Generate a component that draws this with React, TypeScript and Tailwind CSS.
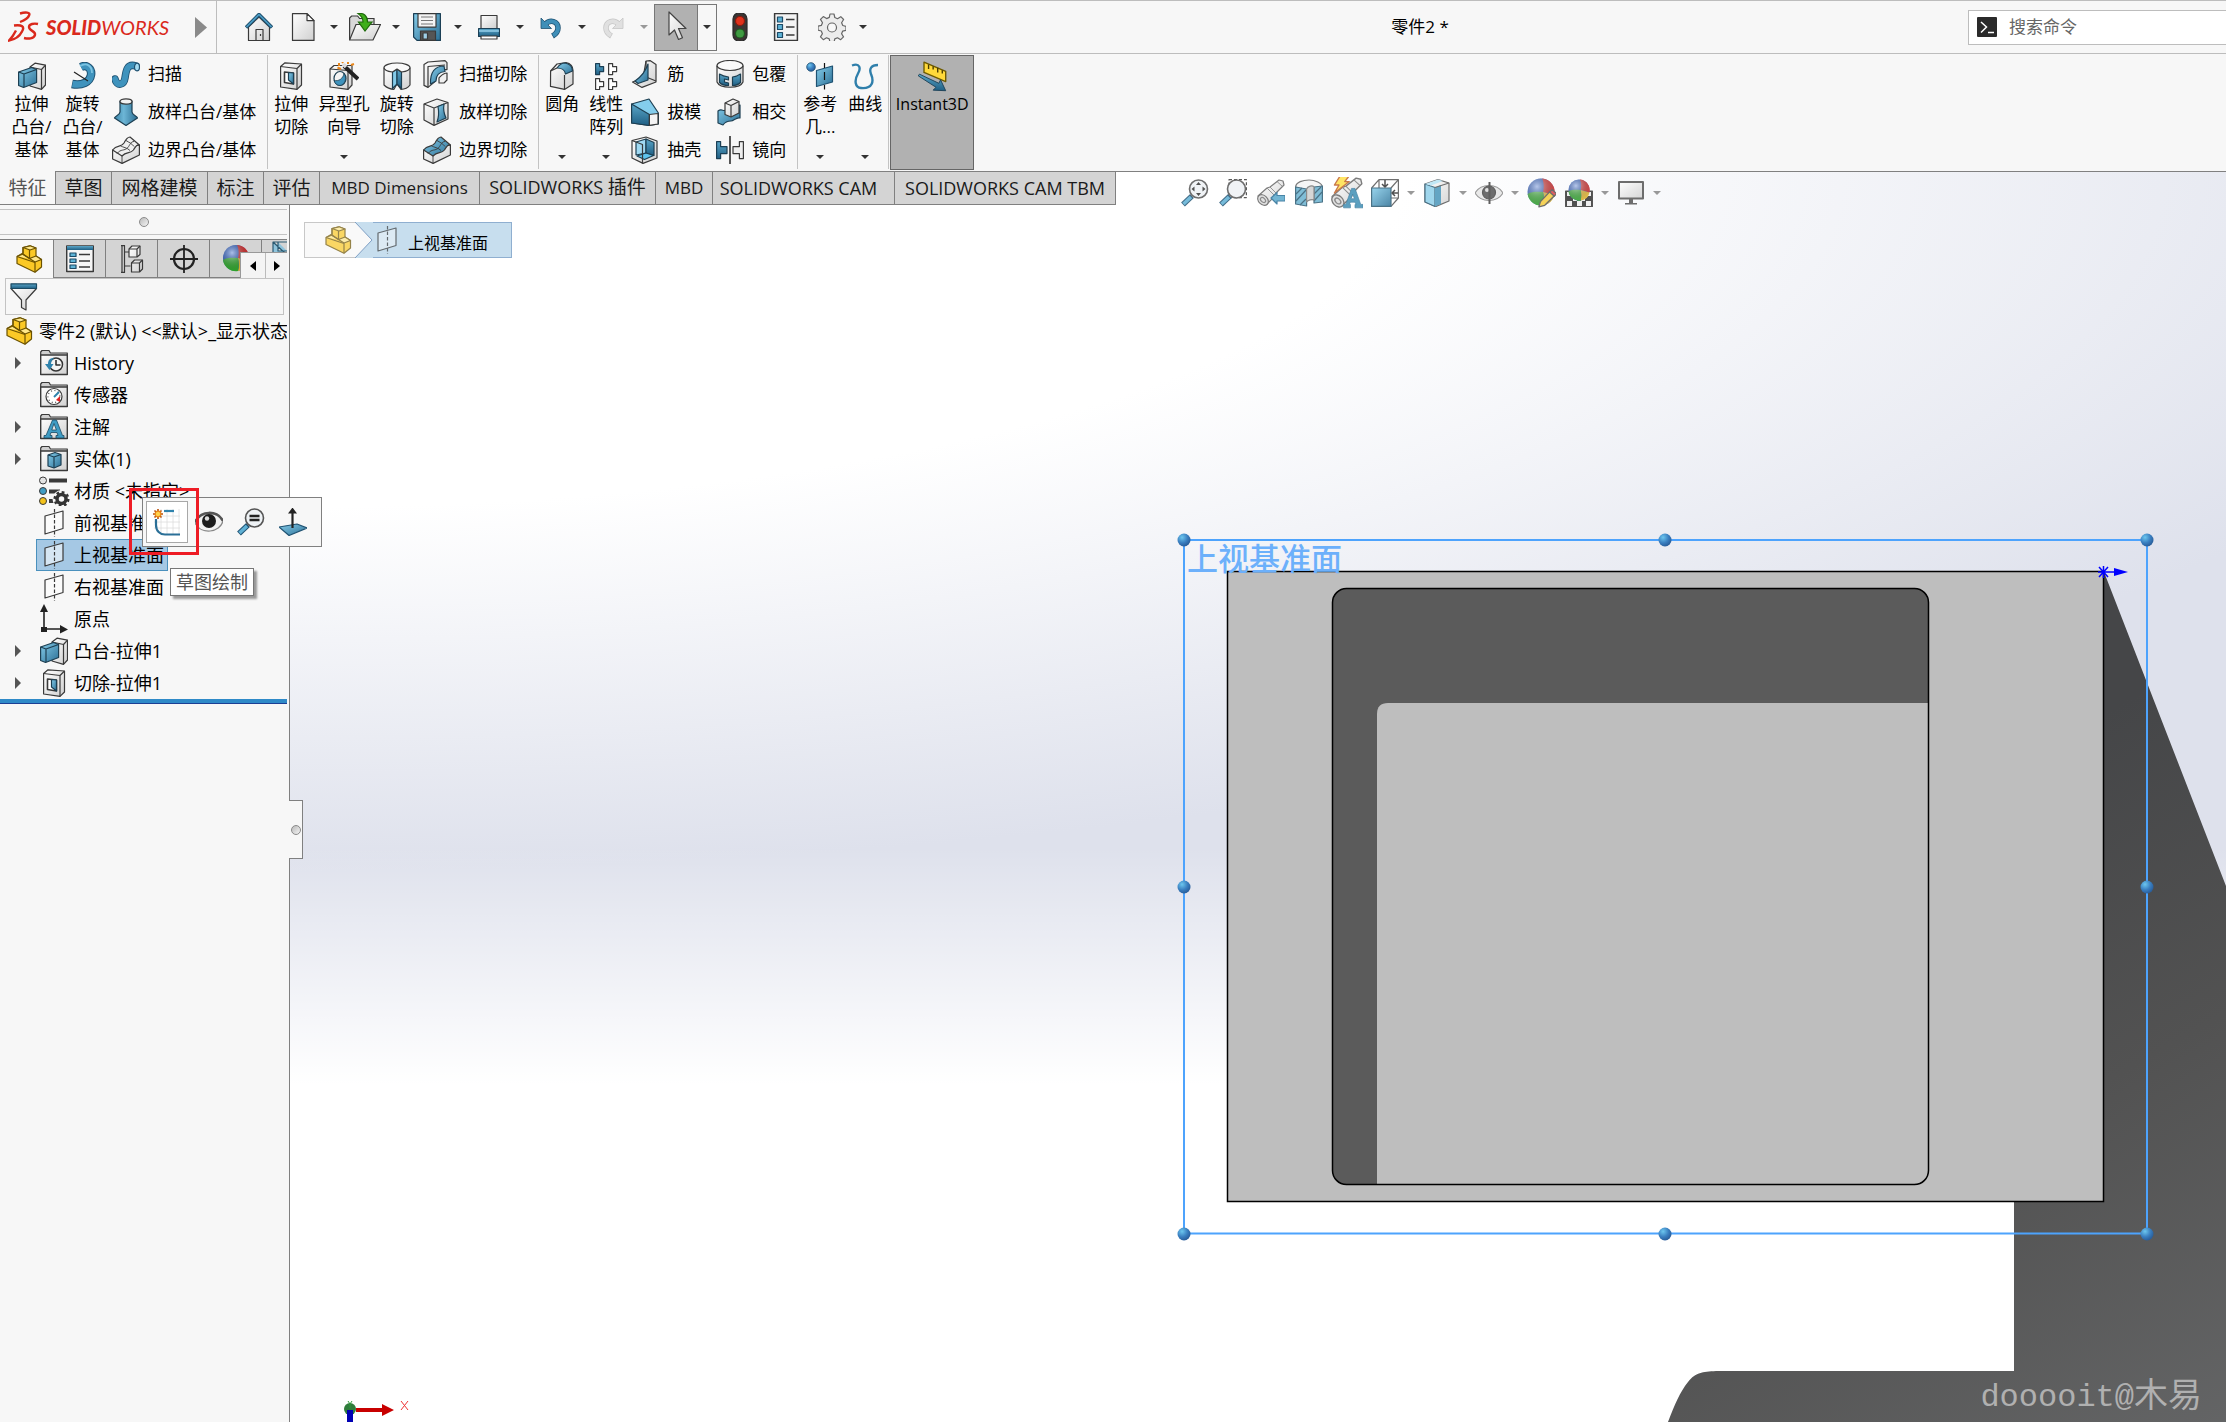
import type { ReactNode } from 'react';

type IconProps = { children: ReactNode; className?: string };

function Svg({ children, className = 'size-7' }: IconProps) {
  return (
    <svg
      viewBox="0 0 28 28"
      className={`shrink-0 ${className}`}
      fill="none"
      stroke="#3a3a3a"
      strokeWidth="1.2"
      strokeLinejoin="round"
      aria-hidden="true"
    >
      {children}
    </svg>
  );
}

/* gradients shared by all icons */
function IconDefs() {
  return (
    <svg className="absolute size-0" aria-hidden="true">
      <defs>
        <linearGradient id="blue" x1="0" y1="0" x2="1" y2="1">
          <stop offset="0" stopColor="#86cdea" />
          <stop offset="1" stopColor="#2c7096" />
        </linearGradient>
        <linearGradient id="steel" x1="0" y1="0" x2="0" y2="1">
          <stop offset="0" stopColor="#5aa6c8" />
          <stop offset="1" stopColor="#1f5f84" />
        </linearGradient>
        <linearGradient id="grey" x1="0" y1="0" x2="1" y2="1">
          <stop offset="0" stopColor="#ffffff" />
          <stop offset="1" stopColor="#d0d0d0" />
        </linearGradient>
        <linearGradient id="cone" x1="0" y1="0" x2="1" y2="0">
          <stop offset="0" stopColor="#3a85aa" />
          <stop offset="0.4" stopColor="#6db6d6" />
          <stop offset="1" stopColor="#2b6d92" />
        </linearGradient>
        <radialGradient id="ball" cx="0.35" cy="0.3" r="0.7">
          <stop offset="0" stopColor="#6cc6ee" />
          <stop offset="0.6" stopColor="#3a7fc0" />
          <stop offset="1" stopColor="#2a5f9c" />
        </radialGradient>
        <radialGradient id="shine" cx="0.35" cy="0.3" r="0.7">
          <stop offset="0" stopColor="#fff" stopOpacity="0.6" />
          <stop offset="1" stopColor="#000" stopOpacity="0.12" />
        </radialGradient>
      </defs>
    </svg>
  );
}

function Caret({ className = 'text-[#333]' }: { className?: string }) {
  return (
    <svg viewBox="0 0 8 4" className={`h-1 w-2 ${className}`} fill="currentColor" aria-hidden="true">
      <path d="M0 0h8L4 4z" />
    </svg>
  );
}

/* ---- quick access bar ---- */

const HomeIcon = () => (
  <Svg>
    <path d="M3.5 14v13.5h21V14L14 4z" fill="url(#grey)" />
    <path d="M11 27.500v-11h7v11M15.500 21v2" />
    <path d="M1 14.500 14 1.500l13 13" stroke="#1f4f6d" strokeWidth="3.600" />
    <path d="M1.500 14 14 1.500l12.500 12.500" stroke="#4a9cc4" strokeWidth="1.600" />
  </Svg>
);

const NewIcon = () => (
  <Svg>
    <path d="M3.500.6h14.500l7 7v19.800H3.500z" fill="url(#grey)" />
    <path d="M18 .6v7h7z" fill="#fff" />
  </Svg>
);

const OpenIcon = () => (
  <svg viewBox="0 0 32 28" className="h-7 w-8 shrink-0" fill="none" stroke="#3a3a3a" strokeWidth="1.200" aria-hidden="true">
    <path d="M.600 27V5l2-2h6l2 2.500H25V14" fill="#d8d8d8" />
    <path d="M.600 27 7 11.500h24.500L24 27z" fill="url(#grey)" />
    <path d="M9 .600c5.500-1 9.500 2 9.500 8.400H23L16 18 9.500 9H14c0-3-1.500-6-5-8.400z" fill="#3fae1c" stroke="#1f6b0c" />
  </svg>
);

const SaveIcon = () => (
  <Svg>
    <path d="M.6.600h26.800v26.800H4L.600 24z" fill="url(#blue)" stroke="#1b3f55" />
    <path d="M5 .600h18v13.500H5z" fill="#f4f4f4" />
    <path d="M8 4h12M8 7.500h12M8 11h12" stroke="#777" />
    <path d="M7.500 18h15v9.400h-15z" fill="#555" />
    <path d="M10 20h4.500v6H10z" fill="#9fd0e8" />
  </Svg>
);

const PrintIcon = () => (
  <Svg>
    <path d="M6 15V2.500h16V15" fill="url(#grey)" />
    <path d="M3.600 15.500h20.800v8H3.600z" fill="url(#steel)" stroke="#1b3f55" />
    <path d="M4 18h20" stroke="#a8def5" />
    <path d="M6 26h16v-3H6z" fill="#fff" />
  </Svg>
);

const UndoIcon = () => (
  <Svg>
    <path d="M8 11.500c5-5.500 13-3.500 13 3.500 0 4-2 6-5.500 8" stroke="#1f5272" strokeWidth="5.500" />
    <path d="M4 5v10.500h10.500z" fill="#3f8fb8" stroke="#1f5272" strokeWidth="0.800" />
    <path d="M8 11.500c5-5.500 13-3.500 13 3.500 0 4-2 6-5 7.500" stroke="#3f8fb8" strokeWidth="4" />
  </Svg>
);

const RedoIcon = () => (
  <Svg className="size-7 -scale-x-100">
    <path d="M8 11.500c5-5.500 13-3.500 13 3.500 0 4-2 6-5.500 8" stroke="#c6c6c6" strokeWidth="5.500" />
    <path d="M4 5v10.500h10.500z" fill="#e0e0e0" stroke="#c6c6c6" strokeWidth="0.800" />
    <path d="M8 11.500c5-5.500 13-3.500 13 3.500 0 4-2 6-5 7.500" stroke="#e0e0e0" strokeWidth="4" />
  </Svg>
);

const CursorIcon = () => (
  <Svg className="h-8 w-7">
    <path d="M7 -1v23l5.500-5 4 9.500 4-1.700-4-9.300h7.500z" fill="url(#grey)" stroke="#444" />
  </Svg>
);

const LightIcon = () => (
  <Svg>
    <rect x="7" y="0" width="14" height="28" rx="6" fill="#3b3533" stroke="#2a2a2a" />
    <circle cx="14" cy="8" r="4.500" fill="#e0321c" stroke="#8c1a0e" />
    <circle cx="14" cy="20.500" r="4.500" fill="#3f9a41" stroke="#1e5420" />
  </Svg>
);

const OptionListIcon = () => (
  <Svg>
    <path d="M2.600.600h22.800v26.800H2.600z" fill="#f3f3f3" strokeWidth="1.500" />
    <path d="M5.500 4h5v5h-5zM5.500 11.500h5v5h-5zM5.500 19.500h5v5h-5z" fill="#5db3d6" stroke="#1d4a66" />
    <path d="M14 6.500h8.500M14 14h8.500M14 22h8.500" strokeWidth="1.500" />
  </Svg>
);

const GearIcon = () => (
  <Svg>
    <path
      d="M12 1h4l.8 3.500 2.700 1.200 3.300-2 2.800 2.800-2 3.300 1.200 2.700 3.200.8v4l-3.300.8-1.100 2.600 1.900 3.200-2.800 2.800-3.200-1.900-2.700 1.100-.8 3.300h-4l-.8-3.300-2.700-1.100-3.200 1.900-2.800-2.800 1.900-3.200L3.300 18 0 17.200v-4l3.300-.8 1.200-2.700-2-3.300 2.800-2.800 3.300 2 2.700-1.200z"
      fill="#ececec"
      stroke="#666"
    />
    <circle cx="14" cy="14.500" r="4.500" fill="#f8f8f8" stroke="#666" />
  </Svg>
);

/* ---- ribbon ---- */

const ExtrudeIcon = () => (
  <Svg>
    <path d="m12 5 5-3.800 10.500 2V23l-4 4.400L12 24z" fill="url(#grey)" />
    <path d="m12 5 11.500 2.500V27M23.500 7.500l4-4.300" />
    <path d="M.600 10v13.500l5 2 13-5V7.500l-5-2z" fill="url(#blue)" stroke="#1d3f52" />
    <path d="m.600 10 5.400 2 12.600-4.500M6 12v13" stroke="#1d3f52" />
  </Svg>
);

const RevolveIcon = () => (
  <Svg>
    <path d="M12 5c6-3 11 2 10 8-1 7-9 11-19 9" stroke="#1f5272" strokeWidth="8.500" />
    <path d="M12 5c6-3 11 2 10 8-1 7-9 11-18.500 9" stroke="#3f93bd" strokeWidth="6.500" />
    <path d="M11 4c7-4 12 0 12 7" stroke="#7cc4e2" strokeWidth="1.800" />
    <path d="m5 10 14 9" stroke="#222" />
  </Svg>
);

const SweepIcon = () => (
  <Svg>
    <path d="M3 19c2 8 9 6 10-1S15 3 24 6" stroke="#1f5272" strokeWidth="7.500" strokeLinecap="round" />
    <path d="M3 19c2 8 9 6 10-1S15 3 24 6" stroke="#3f93bd" strokeWidth="5.800" strokeLinecap="round" />
    <ellipse cx="25" cy="7" rx="2.500" ry="3.800" fill="#a4dcf2" stroke="#1f5272" />
  </Svg>
);

const LoftIcon = () => (
  <Svg>
    <path d="M8 3v11c0 3-5 4-5.500 6L14 27.500 25.500 20c0-2-5.500-3-5.500-6V3z" fill="url(#cone)" stroke="#1d3f52" />
    <ellipse cx="14" cy="3.500" rx="6" ry="2.600" fill="#f2f2f2" />
  </Svg>
);

function BoundarySolid({ top }: { top: string }) {
  return (
    <Svg>
      <path d="M.600 14v9l9.500 4.400L27.400 19V9z" fill="url(#grey)" />
      <path d="M.600 14C5 8 9 12 12 7c2-4 4-6 6-6l9.400 8c-3-1-4 2-6 5-3 4-7 1-11.400 6z" fill={top} />
      <path d="M5 17.500c4-5 7-2 11-6 2-3 3-6 6-6M8 9.500c3 2 7 2 10 5M14 4.500c3 2 6 3 8 6M10 20v7.400" strokeWidth="0.900" />
    </Svg>
  );
}

const CutExtrudeIcon = () => (
  <Svg>
    <path d="M3.600 4.500 8 .800 24.500 2v21L20 27.400 3.600 25z" fill="url(#grey)" />
    <path d="m3.600 4.500 16.400 2v21M20 6.500 24.500 2" />
    <path d="m7.500 10 9 1v11l-9-1.500z" fill="#fff" strokeWidth="1.600" />
    <path d="M16.500 11v11l-5-4v-7.500z" fill="url(#blue)" stroke="#1d3f52" />
  </Svg>
);

const HoleWizardIcon = () => (
  <Svg className="h-7 w-[30px]">
    <path d="m0 7 4-3.500h18V23l-4 4.400L0 25z" fill="url(#grey)" />
    <path d="m0 7 18 1.500v19" />
    <ellipse cx="10" cy="16.500" rx="6" ry="7" fill="#f4f4f4" stroke="#1d3f52" />
    <path d="M14 11.500c3 4 1.500 11-4 12-3 0-5-2-6-5 5 1 9-2 10-7z" fill="#3f93bd" stroke="#1d3f52" strokeWidth="0.800" />
    <path d="m14 4 14 13" stroke="#222" strokeWidth="4" />
    <path d="m13 2 3 3" stroke="#ddd" strokeWidth="3.500" />
    <path d="M9 1v3M7.500 5.500 11 7M18 -1v3M21 3l3-1M12 -1l1 2" stroke="#e8861a" strokeWidth="2" />
  </Svg>
);

const CutRevolveIcon = () => (
  <Svg>
    <path d="M1 6v17c3 3 7 4.300 10 4.300L14 22l4 5.300c4 0 7-1.500 9-4.300V6z" fill="url(#grey)" />
    <path d="M14 7v15l-4.500 4.500V10z" fill="#84cbe9" stroke="#1d3f52" />
    <path d="M14 7v15l4.500 4.500V10z" fill="url(#steel)" stroke="#1d3f52" />
    <path d="M9.500 10C5 9.500 1 8 1 5.500S7 1 14 1s13 2 13 4.500-4 4-8.500 4.500L14 7z" fill="#fafafa" />
  </Svg>
);

const CutSweepIcon = () => (
  <Svg>
    <path d="M1 4.500 5 2 22 .600l2 2v7h-4c-5 1-8 5-8 12L5 27.400l-4-2z" fill="url(#grey)" />
    <path d="M21 6C12 6 7 12 7.500 24l5.500-3c0-5 3-9 9-9.500z" fill="url(#blue)" stroke="#1d3f52" />
    <path d="M16 18c2-2 4-5 8-5v7l-3 3h-5z" fill="#f0f0f0" />
    <path d="M5 27.400V6.500L22 5" />
  </Svg>
);

const CutLoftIcon = () => (
  <Svg>
    <path d="m1 6 13-5 11 3.500V21l-14 6.400L1 22z" fill="url(#grey)" />
    <path d="m1 6 10 4 14-5.500M11 10v17" />
    <path d="m15 8.500 6-2.500c-1 6 0 10 2 14l-9 4c2-5 2-10 1-15.500z" fill="url(#blue)" stroke="#1d3f52" />
  </Svg>
);

const FilletIcon = () => (
  <Svg>
    <path d="M2.600 9 9 2l9-1.400c5 1 7 4 7 8V22l-8.500 5.400-14-3z" fill="url(#grey)" />
    <path d="M9 6c2-3 4-5 8-5 5 1 7.500 4 7.500 8l-7 3C17 8 13 6 9 6z" fill="url(#blue)" stroke="#1d3f52" />
    <path d="M2.600 9 9 6m7.500 21.400V13" />
  </Svg>
);

const PatternIcon = () => (
  <Svg>
    <path d="M3.600 1.600h4v3h4v5h-4v3h-4z" fill="url(#steel)" stroke="#1b3f55" />
    <path
      d="M16.600 1.600h4v3h4v5h-4v3h-4zM3.600 16.600h4v3h4v5h-4v3h-4zM16.600 16.600h4v3h4v5h-4v3h-4z"
      fill="#fff"
    />
  </Svg>
);

const RibIcon = () => (
  <Svg>
    <path d="M15 1l4-.400 6 4V22l-14 5.400L1.500 22 12 18z" fill="url(#grey)" />
    <path d="M15 1v16l10 4" />
    <path d="M4 21C10 17 15 10 17 4v16l-10 3.500z" fill="url(#blue)" stroke="#1d3f52" />
  </Svg>
);

const DraftIcon = () => (
  <Svg>
    <path d="M.600 6 18 1l9.400 14v11l-9 1.400L.600 25z" fill="#84cdec" stroke="#1d3f52" />
    <path d="m.600 6 17.800 10.500v11L.600 25z" fill="url(#steel)" stroke="#1d3f52" />
    <path d="M18.400 16.500 27 15.500V26l-8.600 1.400z" fill="#f4f4f4" />
  </Svg>
);

const ShellIcon = () => (
  <Svg>
    <path d="M1 4.500 15 1l11 4v17l-14 5.400L1 22z" fill="url(#grey)" />
    <path d="m5 6 10-3v14L5 19z" fill="#9fd9f2" stroke="#1d3f52" />
    <path d="m15 3 8 3.500v13L15 17z" fill="url(#steel)" stroke="#1d3f52" />
    <path d="m6 20 9-3 7.500 2.500-9 4z" fill="#5fc4ee" stroke="#1d3f52" />
    <path d="m1 4.500 10.500 4v19" />
  </Svg>
);

const WrapIcon = () => (
  <Svg>
    <path d="M1 6v16c3 7 23 7 26 0V6z" fill="url(#grey)" />
    <ellipse cx="14" cy="5.500" rx="13" ry="5" fill="#fafafa" />
    <path d="M3.500 14c3 2 5 2.500 9 3v3l-4-1v3l4 1v2.500c-4 0-7-1-9-3z" fill="url(#steel)" stroke="#1d3f52" />
    <path d="M24.500 14c-3 2-4 2.500-8 3v8.500c4 0 6-1 8-3z" fill="url(#steel)" stroke="#1d3f52" />
  </Svg>
);

const IntersectIcon = () => (
  <Svg>
    <path d="M2 13c4-3 5 1 8-1l14-5v13c-4-1-6 3-9 3s-6 1-8 4l-5-2z" fill="url(#blue)" stroke="#1d3f52" />
    <path d="m9 5 8-4 6 2.500V15l-8 4-6-2.500z" fill="url(#grey)" />
    <path d="m9 5 6 2.500 8-4M15 7.500V19" />
  </Svg>
);

const MirrorIcon = () => (
  <Svg className="h-7 w-[30px]">
    <path d="M.600 5.600h4v5h6.400v7H4.600v5h-4z" fill="url(#steel)" stroke="#1b3f55" />
    <path d="M27.400 5.600h-4v5H17v7h6.400v5h4z" fill="#eee" />
    <path d="M14 0v28" stroke="#111" strokeWidth="1.400" />
  </Svg>
);

const RefGeomIcon = () => (
  <Svg>
    <circle cx="5" cy="5" r="4.300" fill="url(#ball)" stroke="#1f5272" strokeWidth="0.800" />
    <path d="m10.500 8.500 16-4.500v16l-16 4.500z" fill="url(#blue)" stroke="#1f5272" />
    <path d="M18.500 1v5M18.500 10v8M18.500 23v4.500" stroke="#111" />
  </Svg>
);

const CurveIcon = () => (
  <Svg>
    <path
      d="M1 3.500c8-3 9 3 6 8-4 7-3 14 3 14.500 12 1 13-7 10-14-2-5 0-9 7-9"
      stroke="#2f7fab"
      strokeWidth="2.400"
    />
  </Svg>
);

const Instant3DIcon = () => (
  <Svg className="h-8 w-8">
    <path d="m7 1 19 8v9L7 10z" fill="#ffd93a" stroke="#6d5a00" />
    <path d="M11 3v4M15 4.500v3M19 6v4M23 8v3" stroke="#4a3d00" />
    <path d="m2 13 1-1.500 17 8 1.500-3L26 26l-11-.500 2.500-2.500z" fill="url(#steel)" stroke="#1b3f55" strokeWidth="0.800" />
  </Svg>
);

/* ---- feature tree ---- */

const PartIcon = () => (
  <Svg>
    <path d="M2 11.500 8 8V2.500L15 .800l6 2.200v8l5.500 3.500V22L20 27.200 2 18.500z" fill="#fbc926" stroke="#6b5200" />
    <path d="M8 2.500 15 .800 21 3l-6 2z M2 11.500 8 9l6.500 4.500M20 17l6.500-2.500L21 11l-6.500 2.500z" fill="#ffe88a" stroke="#6b5200" />
    <path d="M8 2.500v7l6.500 4V5M2 11.500 20 17.500v9.700" stroke="#6b5200" />
  </Svg>
);

function Folder({ children }: { children: ReactNode }) {
  return (
    <Svg>
      <path d="M.700 25.500V3L2 1.500h7L10.500 4h16.800v21.500z" fill="#cfcfcf" />
      <path d="M.700 6h26.600v19.500H.700z" fill="url(#grey)" strokeWidth="1.400" />
      {children}
    </Svg>
  );
}

const HistoryIcon = () => (
  <Folder>
    <circle cx="16" cy="15.500" r="6.500" fill="#f6f6f6" stroke="#333" strokeWidth="1.500" />
    <path d="M16 11v5h4.500" stroke="#333" strokeWidth="1.600" />
    <path d="M14 9c-4 0-6 2-6 6H5l4.500 6 4-6H11c0-2 1-4 3-6z" fill="#2f83ad" stroke="none" />
  </Folder>
);

const SensorIcon = () => (
  <Folder>
    <circle cx="14" cy="15.500" r="8" fill="#fff" />
    <circle cx="14" cy="15.500" r="6" stroke="#555" strokeDasharray="1 2.500" />
    <path d="M20 15v6l-4-2z" fill="#e02020" stroke="none" />
    <path d="m14 16 5-5" stroke="#2f83ad" strokeWidth="2" />
  </Folder>
);

const NoteIcon = () => (
  <Folder>
    <path
      d="M12.500 7h4l6 15.500h1.500V25h-8v-2.500h2l-1-3h-6l-1 3h2V25H4v-2.500h2zM14 10.500 11.800 17h4.600z"
      fill="#3f9cc4"
      stroke="#1b4a63"
      strokeWidth="0.800"
    />
  </Folder>
);

const SolidIcon = () => (
  <Folder>
    <path d="m8 10 7-2.500 6 2v10.500l-7 3-6-2z" fill="url(#blue)" stroke="#1d3f52" />
    <path d="m8 10 6 2 7-2.500M14 12v11" stroke="#1d3f52" />
  </Folder>
);

const MaterialIcon = () => (
  <svg viewBox="0 0 32 30" className="h-[30px] w-8 shrink-0" fill="none" stroke="#3a3a3a" aria-hidden="true">
    <path d="M11 4.500h18M11 15.500h11M11 25h5" strokeWidth="4" />
    <circle cx="5" cy="4.500" r="3.500" fill="#e4e4e4" />
    <circle cx="5" cy="15" r="3.500" fill="#3f9cc4" />
    <circle cx="5" cy="25" r="3.500" fill="#f3c21a" />
    <circle cx="23.500" cy="23" r="7" stroke="#f7f7f7" strokeWidth="4" />
    <circle cx="23.500" cy="23" r="4.500" stroke="#333" strokeWidth="3.500" />
    <circle cx="23.500" cy="23" r="6.800" stroke="#333" strokeWidth="2.500" strokeDasharray="2.700 2.640" />
  </svg>
);

const PlaneIcon = ({ className = 'size-7' }: { className?: string }) => (
  <Svg className={className}>
    <path d="M5 7 23 2v17.500L5 25z" fill="#fff" fillOpacity="0.550" />
    <path d="M14.500 0v28" strokeDasharray="3.500 2" />
  </Svg>
);

const OriginIcon = () => (
  <Svg className="h-[30px] w-7">
    <path d="M4 4v20h17" strokeWidth="1.600" stroke="#222" />
    <path d="M1 22h6v5H1zM0 7l4-8 4 8zM20 20l8 4.500-8 4z" fill="#222" stroke="none" />
  </Svg>
);

/* ---- manager tabs ---- */

const PropertyIcon = () => (
  <Svg>
    <path d="M.700 1h26.600v25.500H.700z" fill="#f6f6f6" strokeWidth="1.500" />
    <path d="M1 1h26v4H1z" fill="url(#steel)" stroke="none" />
    <path d="M4 8h6v3.500H4zM4 14h6v3.500H4zM4 20h6v3.500H4z" fill="#5db3d6" stroke="#1d4a66" />
    <path d="M13 9.500h11M13 16h11M13 22h11" strokeWidth="1.500" />
  </Svg>
);

const ConfigIcon = () => (
  <Svg>
    <path d="M3 .600h4M3 27.400h4M4 .600v26.800h2.500V.600M6.500 7H11M6.500 21h6" />
    <path d="m11 4 3-3h8v8.500L19 12h-8zM13.500 18l3-3h8v9l-3 3h-8z" fill="url(#grey)" />
    <path d="M11 4h8v8M19 4l3-3M13.500 18h8v9M21.500 18l3-3" />
  </Svg>
);

const DimXpertIcon = () => (
  <Svg>
    <circle cx="14" cy="14" r="10" stroke="#222" strokeWidth="2.200" />
    <path d="M14 0v28M0 14h28" stroke="#222" strokeWidth="1.800" />
  </Svg>
);

const BeachBall = ({ r = 13 }: { r?: number }) => (
  <g transform={`translate(14 13) scale(${r / 13})`} stroke="none">
    <circle r="13" fill="#2e60c8" />
    <path d="M1-13A13 13 0 0 1 13 3L2 0c1-4 1-9-1-13z" fill="#dc2d2d" />
    <path d="M2 0l11 3A13 13 0 0 1 2 13c1-4 1-9 0-13z" fill="#f4c430" />
    <path d="M-13 2C-8-1-3 0 2 0c1 4 1 9 0 13A13 13 0 0 1-13 2z" fill="#35b432" />
    <circle r="13" fill="url(#shine)" />
  </g>
);

const FilterIcon = () => (
  <Svg>
    <path d="M1 5.500h25.500L16 17v10l-4.500-2.500V17z" fill="url(#grey)" />
    <path d="M1 .800h25.500v4.700H1z" fill="url(#steel)" stroke="#1b4a63" />
  </Svg>
);

/* ---- popup toolbar ---- */

const SketchIcon = () => (
  <Svg>
    <path d="M8 1v26M14 1v26M20 1v26M26 1v26M1 8h26M1 14h26M1 20h26" stroke="#ddd" strokeWidth="0.800" />
    <path d="M11 3h10" stroke="#2f83ad" strokeWidth="2.200" />
    <path d="M3 11v6c0 6 4 9.500 9 9.500h15" stroke="#2a6f97" strokeWidth="2.200" />
    <path d="M5 1v10M0 6h10M1.500 2.500l7 7M8.500 2.500l-7 7" stroke="#b8500c" strokeWidth="1.600" />
    <circle cx="5" cy="6" r="2.800" fill="#ffd24a" stroke="#e8861a" />
  </Svg>
);

const EyeIcon = () => (
  <Svg>
    <path d="M0 15C6 3 22 3 28 13c-3 12-22 14-28 2z" fill="#f2f2f2" stroke="#888" />
    <path d="M0 14C6 2 22 2 28 13" stroke="#555" strokeWidth="2.500" />
    <circle cx="14" cy="13" r="7" fill="#1c1c1c" stroke="none" />
    <circle cx="12" cy="10.500" r="2.200" fill="#ddd" stroke="none" />
  </Svg>
);

function Lens({ children }: { children?: ReactNode }) {
  return (
    <>
      <path d="m11 17-9 8.500" stroke="#1f5272" strokeWidth="5.500" />
      <path d="m10 18-7.500 7" stroke="#5fb0d4" strokeWidth="3.500" />
      <circle cx="17.500" cy="10" r="9" fill="#eef2f5" stroke="#555" strokeWidth="1.600" />
      {children}
    </>
  );
}

const ZoomSelIcon = () => (
  <Svg>
    <Lens>
      <path d="M12.500 8h10M12.500 12h10" stroke="#222" strokeWidth="2.400" />
    </Lens>
  </Svg>
);

const NormalToIcon = () => (
  <Svg>
    <path d="m0 19 18-3 10 4-18 7.500z" fill="url(#blue)" stroke="#1f5272" />
    <path d="M13.500 20V4" stroke="#222" strokeWidth="2.200" />
    <path d="m9 5.500 4.500-6 4.500 6z" fill="#222" stroke="none" />
  </Svg>
);

/* ---- view toolbar ---- */

const ZoomFitIcon = () => (
  <Svg>
    <Lens>
      <path d="m17.500 3 2.500 3h-5zM17.500 17l2.500-3h-5zM10.500 10l3-2.500v5zM24.500 10l-3-2.500v5z" fill="#333" stroke="none" />
    </Lens>
  </Svg>
);

const ZoomAreaIcon = () => (
  <Svg>
    <path d="M10 .600h17.400v18H10z" strokeDasharray="3 2" />
    <Lens />
  </Svg>
);

const Scope = () => (
  <>
    <path d="M1 17 10 9l3-1 9-7 4 1 1 4-8 8-1 3-8 8z" fill="url(#grey)" stroke="#666" />
    <path d="m10 9 8 8M13 8l6 6M20 2.500l5.500 5" stroke="#777" strokeWidth="0.900" />
    <ellipse cx="6" cy="21" rx="4.500" ry="6" fill="#dcdcdc" stroke="#666" transform="rotate(-45 6 21)" />
    <ellipse cx="6" cy="21" rx="2" ry="3" stroke="#777" transform="rotate(-45 6 21)" />
  </>
);

const PrevViewIcon = () => (
  <Svg>
    <Scope />
    <path d="m14 19 6-5.500v3h8v5.500h-8v3z" fill="#5aa9cc" stroke="#2a6f97" />
  </Svg>
);

const SectionIcon = () => (
  <Svg>
    <path d="M.600 8C1 3 8 1 14 1s13 3 13.400 7v4l-8 6h-7z" fill="#f4f4f4" stroke="#666" />
    <path d="m.600 8 11 2v17l-11-2zM19 8l8.400-1v16L19 24z" fill="#6bb2d0" stroke="#2b5a72" />
    <path d="m1 15 6-6M1 22l10-11M5 26l6-6M19 15l7-7M19 22l8-9" stroke="#2b5a72" />
    <path d="M11.600 10c1-3 6-4 7.400-2v13c-2-1-6 0-7.400 2z" fill="#d0d0d0" stroke="#777" />
  </Svg>
);

const DynamicIcon = () => (
  <Svg className="h-8 w-8">
    <Scope />
    <path d="M8-1h8l-4 5h4L3 14l4-7H3z" fill="#ffe04a" stroke="#c0612b" />
    <path
      d="M18 10h3l5 14h2v3h-7v-3h1l-1-2h-4l-1 2h1v3h-6v-3h2zM19 15l-1.500 4h3z"
      fill="#3f8fb4"
      stroke="#2a6f97"
      strokeWidth="0.600"
    />
  </Svg>
);

const OrientIcon = () => (
  <Svg>
    <path d="M.600 9 8 .600h19.400V19L20 27.400M8 .600V9M20 19h7.400M20 9l7.400-8.400" fill="#fff" stroke="#555" />
    <path d="M.600 9H20v18.400H.600z" fill="url(#blue)" stroke="#2b5a72" />
    <path d="M14 1v7m-3-3 3 3 3-3M27 14h-6m3-3-3 3 3 3" stroke="#333" strokeWidth="1.500" />
  </Svg>
);

const DisplayIcon = () => (
  <Svg>
    <path d="m2 5 13-4.400L26 4v18l-13 5.400L2 23z" fill="url(#grey)" stroke="#555" />
    <path d="m2 5 10 3.500v19L2 23z" fill="#8fd0ea" stroke="#2b5a72" />
    <path d="m12 8.500 6-2.500v19l-6 2.400z" fill="#4a96ba" stroke="none" />
    <path d="m2 5 13-4.400L20 2 8 6.500z" fill="#b6e3f5" stroke="none" />
    <path d="m12 8.500 14-4.500" stroke="#555" />
  </Svg>
);

const HideShowIcon = () => (
  <Svg>
    <path d="M0 14C6 4 22 4 28 14c-6 10-22 10-28 0z" fill="#e6e6e6" stroke="#888" />
    <circle cx="14" cy="13.500" r="6.500" fill="#555" stroke="#444" />
    <circle cx="12" cy="11" r="2" fill="#ddd" stroke="none" />
    <path d="M14.500 3v22" stroke="#444" strokeWidth="2" />
  </Svg>
);

const AppearanceIcon = () => (
  <Svg className="size-[30px]">
    <BeachBall r={12.5} />
    <path d="m12 27 1.500-5 9-9.500 4 4-9 9z" fill="#f5cb3c" stroke="#555" />
    <path d="m22 13 2.500-2 4 3.500-2 2.500z" fill="#d9434a" stroke="#555" />
  </Svg>
);

const SceneIcon = () => (
  <Svg>
    <path d="M.600 12h26.800v15.400H.600z" fill="#333" />
    <path d="M2 13h4v4H2zM8 18h4v4H8zM16 18h4v4h-4zM22 13h4v4h-4zM2 22h5v5H2zM12 22h5v5h-5zM21 22h5v5h-5z" fill="#eee" stroke="none" />
    <g transform="translate(0 -2)">
      <BeachBall r={10.5} />
    </g>
  </Svg>
);

const MonitorIcon = () => (
  <Svg>
    <path d="M2 3h24v16.500H2z" fill="url(#grey)" stroke="#555" strokeWidth="2" />
    <path d="M12 20h4v4h4v1.500H8V24h4z" fill="#555" stroke="none" />
  </Svg>
);

/* ---- building blocks ---- */

type QuickButtonProps = { label: string; icon: ReactNode; caret?: boolean; faded?: boolean };

function QuickButton({ label, icon, caret = true, faded = false }: QuickButtonProps) {
  return (
    <div className="flex items-center">
      <button aria-label={label} className="flex w-11 items-center justify-center">
        {icon}
      </button>
      {caret && (
        <button aria-label={`${label} 选项`} className="flex h-8 w-[18px] items-center justify-center">
          <Caret className={faded ? 'text-[#999]' : 'text-[#333]'} />
        </button>
      )}
    </div>
  );
}

type BigButtonProps = { icon: ReactNode; lines: string[]; width: string; caret?: boolean };

function BigButton({ icon, lines, width, caret = false }: BigButtonProps) {
  return (
    <button className={`flex flex-col items-center ${width}`}>
      <span className="mt-[7px] mb-[2px] flex h-7 items-center">{icon}</span>
      {lines.map((line) => (
        <span key={line} className="leading-[23px] whitespace-nowrap">
          {line}
        </span>
      ))}
      {caret && (
        <span className="mt-auto flex pb-[10px]">
          <Caret />
        </span>
      )}
    </button>
  );
}

function SmallButtons({ items, className = '' }: { items: [string, ReactNode][]; className?: string }) {
  return (
    <div className={`flex flex-col ${className}`}>
      {items.map(([label, icon]) => (
        <button key={label} className="flex h-[38px] items-center gap-2 whitespace-nowrap">
          <span className="flex w-7 justify-center">{icon}</span>
          {label}
        </button>
      ))}
    </div>
  );
}

function RibbonGroup({ children }: { children: ReactNode }) {
  return <div className="mt-px flex h-[114px] border-r border-[#c3c3c3]">{children}</div>;
}

function TitleBar() {
  return (
    <header className="flex h-[54px] items-center border-t border-b border-[#bdbdbd] bg-[#f7f7f7]">
      <div className="flex h-full w-[217px] items-center border-r border-[#bdbdbd] pl-2">
        <svg viewBox="0 0 31 32" className="h-8 w-[31px]" fill="none" stroke="#da291c" strokeWidth="2.400" aria-hidden="true">
          <path d="M12 2.500c5-1.500 11-1.500 9 2-1 3-5 5-9 6.500M6 14.500c8-1 11 1 8 6-2 4-7 8-13 9 3-3 5-6 7-10" />
          <path d="M30 13c-4-1-9 0-9 3 0 4 7 4 6 8s-7 4-11 3" />
        </svg>
        <span className="ml-[7px] w-[142px] font-[Lato] text-xl leading-7 whitespace-nowrap text-[#da291c] italic">
          <b className="font-black">SOLID</b>WORKS
        </span>
        <button aria-label="展开菜单" className="ml-[7px]">
          <svg viewBox="0 0 12 21" className="h-[21px] w-3" fill="#8a8a8a" aria-hidden="true">
            <path d="M0 0v21l12-10.500z" />
          </svg>
        </button>
      </div>
      <nav className="flex h-full items-center pl-5" aria-label="快速访问">
        <QuickButton label="主页" icon={<HomeIcon />} caret={false} />
        <QuickButton label="新建" icon={<NewIcon />} />
        <QuickButton label="打开" icon={<OpenIcon />} />
        <QuickButton label="保存" icon={<SaveIcon />} />
        <QuickButton label="打印" icon={<PrintIcon />} />
        <QuickButton label="撤销" icon={<UndoIcon />} />
        <QuickButton label="重做" icon={<RedoIcon />} faded />
        <div className="ml-px flex h-[47px] border border-[#777]">
          <button aria-label="选择" className="flex w-[42px] items-center justify-center bg-[#b1b1b1]">
            <CursorIcon />
          </button>
          <button aria-label="选择 选项" className="flex w-[19px] items-center justify-center border-l border-[#777]">
            <Caret />
          </button>
        </div>
        <div className="ml-px flex gap-[2px]">
          <QuickButton label="重建模型" icon={<LightIcon />} caret={false} />
          <QuickButton label="文件属性" icon={<OptionListIcon />} caret={false} />
          <QuickButton label="选项" icon={<GearIcon />} />
        </div>
      </nav>
      <h1 className="flex-1 text-center text-[17px]">零件2 *</h1>
      <label className="flex h-[35px] w-[258px] items-center gap-3 border border-r-0 border-[#bdbdbd] bg-white pl-2">
        <svg viewBox="0 0 20 20" className="size-5 shrink-0" fill="none" aria-hidden="true">
          <rect width="20" height="20" rx="1" fill="#2a2a2a" />
          <path d="m4 5 5.500 5L4 15.500M11 15.500h6" stroke="#fff" strokeWidth="1.500" />
        </svg>
        <input
          type="text"
          aria-label="搜索命令"
          placeholder="搜索命令"
          className="w-full min-w-0 text-[17px] outline-none placeholder:text-[#666]"
        />
      </label>
    </header>
  );
}

function Ribbon() {
  return (
    <div className="flex h-[117px] bg-[#f7f7f7] text-[17px]">
      <RibbonGroup>
        <div className="flex pl-[6px]">
          <BigButton icon={<ExtrudeIcon />} lines={['拉伸', '凸台/', '基体']} width="w-[51px]" />
          <BigButton icon={<RevolveIcon />} lines={['旋转', '凸台/', '基体']} width="w-[51px]" />
        </div>
        <SmallButtons
          className="pr-[11px] pl-1"
          items={[
            ['扫描', <SweepIcon />],
            ['放样凸台/基体', <LoftIcon />],
            ['边界凸台/基体', <BoundarySolid top="#f0f0f0" />],
          ]}
        />
      </RibbonGroup>
      <RibbonGroup>
        <BigButton icon={<CutExtrudeIcon />} lines={['拉伸', '切除']} width="w-[46px]" />
        <BigButton icon={<HoleWizardIcon />} lines={['异型孔', '向导']} width="w-[60px]" caret />
        <BigButton icon={<CutRevolveIcon />} lines={['旋转', '切除']} width="w-[45px]" />
        <SmallButtons
          className="pr-[11px] pl-1"
          items={[
            ['扫描切除', <CutSweepIcon />],
            ['放样切除', <CutLoftIcon />],
            ['边界切除', <BoundarySolid top="url(#blue)" />],
          ]}
        />
      </RibbonGroup>
      <RibbonGroup>
        <BigButton icon={<FilletIcon />} lines={['圆角']} width="w-[46px]" caret />
        <BigButton icon={<PatternIcon />} lines={['线性', '阵列']} width="w-[42px]" caret />
        <SmallButtons
          className="pl-1"
          items={[
            ['筋', <RibIcon />],
            ['拔模', <DraftIcon />],
            ['抽壳', <ShellIcon />],
          ]}
        />
        <SmallButtons
          className="pr-[11px] pl-[15px]"
          items={[
            ['包覆', <WrapIcon />],
            ['相交', <IntersectIcon />],
            ['镜向', <MirrorIcon />],
          ]}
        />
      </RibbonGroup>
      <RibbonGroup>
        <BigButton icon={<RefGeomIcon />} lines={['参考', '几...']} width="w-11" caret />
        <BigButton icon={<CurveIcon />} lines={['曲线']} width="w-[46px]" caret />
      </RibbonGroup>
      <div className="mt-px ml-px flex h-[115px] border border-[#666] bg-[#b1b1b1] text-base">
        <BigButton icon={<Instant3DIcon />} lines={['Instant3D']} width="w-[82px]" />
      </div>
    </div>
  );
}

const COMMAND_TABS = [
  { cjk: '草图', width: 'w-14' },
  { cjk: '网格建模', width: 'w-24' },
  { cjk: '标注', width: 'w-14' },
  { cjk: '评估', width: 'w-14' },
  { latin: 'MBD Dimensions', width: 'w-[160px] text-[17px]' },
  { latin: 'SOLIDWORKS ', cjk: '插件', width: 'w-[176px] text-lg' },
  { latin: 'MBD', width: 'w-[57px] text-[17px]' },
  { latin: 'SOLIDWORKS CAM', width: 'w-[182px] pr-[10px] text-lg' },
  { latin: 'SOLIDWORKS CAM TBM', width: 'w-[221px] text-lg' },
];

function CommandTabs() {
  return (
    <div role="tablist" className="flex h-[34px] leading-8 text-[#1a1a1a]">
      <button role="tab" aria-selected="true" className="w-[55px] border-b border-[#808080] bg-[#f7f7f7] text-[19px] text-[#555]">
        特征
      </button>
      {COMMAND_TABS.map(({ latin, cjk, width }) => (
        <button
          key={`${latin}${cjk}`}
          role="tab"
          aria-selected="false"
          className={`border-t border-b border-l border-[#808080] bg-[#d4d4d4] whitespace-pre ${width}`}
        >
          {latin}
          {cjk && <span className="text-[19px]">{cjk}</span>}
        </button>
      ))}
      <div className="border-l border-[#808080]" />
    </div>
  );
}

const VIEW_TOOLS: { label: string; icon: ReactNode; caret?: boolean }[] = [
  { label: '整屏显示全图', icon: <ZoomFitIcon /> },
  { label: '局部放大', icon: <ZoomAreaIcon /> },
  { label: '上一视图', icon: <PrevViewIcon /> },
  { label: '剖面视图', icon: <SectionIcon /> },
  { label: '动态注解视图', icon: <DynamicIcon /> },
  { label: '视图定向', icon: <OrientIcon />, caret: true },
  { label: '显示样式', icon: <DisplayIcon />, caret: true },
  { label: '隐藏/显示项目', icon: <HideShowIcon />, caret: true },
  { label: '编辑外观', icon: <AppearanceIcon /> },
  { label: '应用布景', icon: <SceneIcon />, caret: true },
  { label: '视图设置', icon: <MonitorIcon />, caret: true },
];

function ViewToolbar() {
  return (
    <div className="ml-15 flex h-[42px] items-center opacity-85">
      {VIEW_TOOLS.map(({ label, icon, caret }) => (
        <button key={label} aria-label={label} className="flex items-center">
          <span className="flex w-[38px] justify-center">{icon}</span>
          {caret && (
            <span className="flex w-[14px] justify-center">
              <Caret className="text-[#888]" />
            </span>
          )}
        </button>
      ))}
    </div>
  );
}

type TreeItem = { label: string; icon: ReactNode; expandable?: boolean; selected?: boolean };

const TREE: TreeItem[] = [
  { label: 'History', icon: <HistoryIcon />, expandable: true },
  { label: '传感器', icon: <SensorIcon /> },
  { label: '注解', icon: <NoteIcon />, expandable: true },
  { label: '实体(1)', icon: <SolidIcon />, expandable: true },
  { label: '材质 <未指定>', icon: <MaterialIcon /> },
  { label: '前视基准面', icon: <PlaneIcon /> },
  { label: '上视基准面', icon: <PlaneIcon />, selected: true },
  { label: '右视基准面', icon: <PlaneIcon /> },
  { label: '原点', icon: <OriginIcon /> },
  { label: '凸台-拉伸1', icon: <ExtrudeIcon />, expandable: true },
  { label: '切除-拉伸1', icon: <CutExtrudeIcon />, expandable: true },
];

function TreeRow({ label, icon, expandable, selected }: TreeItem) {
  return (
    <li className="flex h-8 items-center">
      <span className="w-9 pl-[15px]">
        {expandable && (
          <svg viewBox="0 0 6 12" className="h-3 w-[6px]" fill="#555" aria-hidden="true">
            <path d="M0 0v12l6-6z" />
          </svg>
        )}
      </span>
      <button
        className={`flex h-8 items-center gap-[6px] border px-[3px] whitespace-nowrap ${
          selected ? 'border-[#4a90bd] bg-[#a5c8e4]' : 'border-transparent'
        }`}
      >
        <span className="flex w-7 justify-center">{icon}</span>
        {label}
      </button>
    </li>
  );
}

function Dot() {
  return <span className="size-[10px] rounded-full border border-[#8a8a8a] bg-linear-to-br from-[#bbb] to-[#f4f4f4]" />;
}

function ContextToolbar() {
  return (
    <div className="absolute top-[292px] left-[142px] z-20 flex h-[50px] w-[180px] items-center border border-[#808080] bg-[#f7f7f7] pl-[3px]">
      <button aria-label="草图绘制" className="flex size-[42px] items-center justify-center border border-[#a8a8a8] bg-white">
        <SketchIcon />
      </button>
      <button aria-label="显示" className="flex w-[42px] justify-center">
        <EyeIcon />
      </button>
      <button aria-label="放大所选范围" className="flex w-[42px] justify-center">
        <ZoomSelIcon />
      </button>
      <button aria-label="正视于" className="flex w-[42px] justify-center">
        <NormalToIcon />
      </button>
    </div>
  );
}

const MANAGER_TABS = [
  { label: '属性', icon: <PropertyIcon /> },
  { label: '配置', icon: <ConfigIcon /> },
  { label: '尺寸专家', icon: <DimXpertIcon /> },
  {
    label: '显示管理',
    icon: (
      <Svg>
        <BeachBall />
      </Svg>
    ),
  },
];

function FeaturePanel() {
  return (
    <aside className="relative w-[290px] shrink-0 border-r border-[#808080] bg-[#f7f7f7] text-lg">
      <div className="mt-1 mr-[2px] flex h-[26px] items-center justify-center border-t border-b border-[#c3c3c3]">
        <Dot />
      </div>
      <div className="relative mt-1 mr-[2px] flex h-[39px] overflow-hidden border-t border-[#808080]">
        <button aria-label="设计树" className="flex w-[53px] shrink-0 items-center justify-center pl-1">
          <PartIcon />
        </button>
        {MANAGER_TABS.map(({ label, icon }) => (
          <button
            key={label}
            aria-label={label}
            className="flex w-[52px] shrink-0 items-center justify-center border-b border-l border-[#808080] bg-[#d4d4d4]"
          >
            {icon}
          </button>
        ))}
        <button aria-label="CAM" className="flex w-[52px] shrink-0 border-b border-l border-[#808080] bg-[#d4d4d4] pl-[10px]">
          <Svg>
            <path d="M1 2h26v20H1zM1 2l13 12L27 2M6 2v9h9" fill="#8fc4dc" stroke="#2b5a72" />
          </Svg>
        </button>
        <div className="absolute right-0 bottom-0 flex h-[26px] border-t border-l border-[#999] bg-[#f4f4f4]">
          <button aria-label="向左" className="flex w-6 items-center justify-center">
            <svg viewBox="0 0 6 10" className="h-[10px] w-[6px]" aria-hidden="true">
              <path d="M6 0v10L0 5z" />
            </svg>
          </button>
          <button aria-label="向右" className="flex w-[22px] items-center justify-center border-l border-[#bbb]">
            <svg viewBox="0 0 6 10" className="h-[10px] w-[6px]" aria-hidden="true">
              <path d="M0 0v10l6-5z" />
            </svg>
          </button>
        </div>
      </div>
      <label className="mr-[5px] ml-[5px] flex h-[37px] items-center border border-[#c3c3c3] pl-1">
        <FilterIcon />
        <input type="text" aria-label="过滤器" className="min-w-0 flex-1 outline-none" />
      </label>
      <div className="mr-[2px] flex h-8 items-center gap-[6px] overflow-hidden pl-[5px] whitespace-nowrap">
        <PartIcon />
        零件2 (默认) &lt;&lt;默认&gt;_显示状态
      </div>
      <ul>
        {TREE.map((item) => (
          <TreeRow key={item.label} {...item} />
        ))}
      </ul>
      <div className="mr-[2px] h-[5px] border-b border-[#1c3f94] bg-[#2f8ac8]" />
      <ContextToolbar />
      <div className="absolute top-[283px] left-[129px] z-30 h-[67px] w-[70px] border-3 border-[#ee1c25]" />
      <div
        role="tooltip"
        className="absolute top-[363px] left-[170px] z-20 border border-[#777] bg-white px-[5px] leading-[26px] whitespace-nowrap text-[#555] shadow-[3px_3px_2px_#999]"
      >
        草图绘制
      </div>
      <button
        aria-label="折叠面板"
        className="absolute top-[595px] left-[289px] z-10 flex h-[59px] w-[14px] items-center justify-center border border-l-0 border-[#808080] bg-[#f7f7f7]"
      >
        <Dot />
      </button>
    </aside>
  );
}

const HANDLES = [
  [1184, 540], [1665, 540], [2147, 540], [1184, 887],
  [2147, 887], [1184, 1234], [1665, 1234], [2147, 1234],
];

function Model() {
  return (
    <svg
      viewBox="290 205 1936 1217"
      preserveAspectRatio="xMinYMin slice"
      className="absolute inset-0 size-full"
      fill="none"
      role="img"
      aria-label="零件2"
    >
      <defs>
        <linearGradient id="shadow" gradientUnits="userSpaceOnUse" x1="1950" y1="800" x2="2300" y2="1422">
          <stop offset="0" stopColor="#454648" />
          <stop offset="0.450" stopColor="#525252" />
          <stop offset="1" stopColor="#656667" />
        </linearGradient>
      </defs>
      <path
        d="M2104 572 2226 886V1422H1668C1675 1404 1680 1392 1688 1382S1702 1372 1716 1371H2014V1202H2104z"
        fill="url(#shadow)"
      />
      <path d="M1227.500 571.500h876v630h-876z" fill="#bebebe" stroke="#000" strokeWidth="1.500" />
      <rect x="1332.500" y="588.500" width="596" height="596" rx="14" fill="#5b5b5b" />
      <path d="M1928 703v467q0 14-14 14h-537V714q0-11 11-11z" fill="#bebebe" />
      <rect x="1332.500" y="588.500" width="596" height="596" rx="14" stroke="#000" strokeWidth="1.500" />
      <path d="M1184 540h963v693.500h-963z" stroke="#4da3fd" strokeWidth="2" />
      {HANDLES.map(([x, y]) => (
        <circle key={`${x}-${y}`} cx={x} cy={y} r="6.500" fill="url(#ball)" />
      ))}
      <text x="1187" y="570" fontSize="31" fontWeight="500" fill="#6cb0fb">
        上视基准面
      </text>
      <path d="M2098 572h18M2103.500 566v12M2099 567l9 10M2108 567l-9 10" stroke="#00f" strokeWidth="1.500" />
      <path d="m2114 568 14 4-14 4z" fill="#00f" />
      <circle cx="350" cy="1409" r="6" fill="#2f7d3b" />
      <path d="M348 1401l2 3 2-3M350 1404v4" stroke="#2f9a3b" />
      <path d="M356 1408h26v-4l12 6-12 6v-4h-26z" fill="#c80000" />
      <path d="M347 1410h6v12h-6z" fill="#0000b4" />
      <path d="m401 1401 7 9M408 1401l-7 9" stroke="#e33" />
    </svg>
  );
}

function Breadcrumb() {
  return (
    <nav className="relative mt-[17px] ml-[14px] flex h-9 w-fit border border-[#c8c8c8] bg-[#f9f9f9]" aria-label="选择路径">
      <a href="#part" aria-label="零件2" className="flex w-[50px] items-center justify-end pr-[3px] opacity-70">
        <PartIcon />
      </a>
      <svg viewBox="0 0 18 36" className="-my-px h-9 w-[18px] bg-[#c7deee]" fill="#f9f9f9" stroke="#7f9fc4" aria-hidden="true">
        <path d="M0 0 17 18 0 36" />
      </svg>
      <a
        href="#plane"
        className="-my-px -mr-px flex h-9 w-[139px] items-center gap-[7px] border border-l-0 border-[#8fafd0] bg-[#c7deee] text-base"
      >
        <PlaneIcon className="size-7 opacity-70" />
        <span className="pt-[6px]">上视基准面</span>
      </a>
    </nav>
  );
}

export default function App() {
  return (
    <div className="flex min-h-screen flex-col overflow-hidden bg-white font-['Open_Sans','Noto_Sans_CJK_SC',sans-serif] text-black">
      <IconDefs />
      <TitleBar />
      <Ribbon />
      <div className="flex flex-1 flex-col bg-[linear-gradient(to_bottom,transparent_54%,white_73%),radial-gradient(ellipse_2300px_700px_at_300px_0px,white_48%,#dee1ec_100%)]">
        <div className="relative z-10 flex h-[34px] items-start border-t border-[#808080]">
          <div className="-mt-px">
            <CommandTabs />
          </div>
          <ViewToolbar />
        </div>
        <div className="flex flex-1">
          <FeaturePanel />
          <main className="relative flex-1">
            <Model />
            <Breadcrumb />
            <p className="absolute right-[24px] bottom-[2px] flex items-center font-['Liberation_Mono','Noto_Sans_CJK_SC',monospace] text-[32px] leading-[44px] text-[#b0b0b0]">
              dooooit@<span className="text-[34px]">木易</span>
            </p>
          </main>
        </div>
      </div>
    </div>
  );
}
